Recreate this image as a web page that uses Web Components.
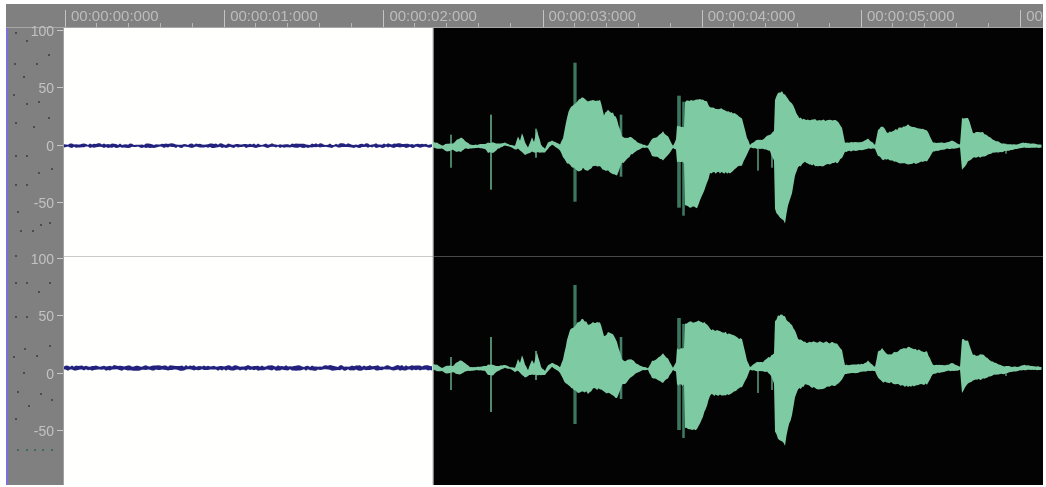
<!DOCTYPE html>
<html>
<head>
<meta charset="utf-8">
<title>Waveform</title>
<style>
  html, body { margin: 0; background: #fff; }
  body { padding: 4px 3px 2px 6px; height: 481px; overflow: hidden; }
</style>
</head>
<body>
<wave-editor>
  <time-ruler></time-ruler>
  <wave-channel height="229"></wave-channel>
  <wave-channel height="228" second></wave-channel>
</wave-editor>

<script>
// envelope in page x, offsets from the centre line (negative is up)
const ENV = [
  [433,-4,2],[437,-3,3],[442,0,3],[447,-2,6],[453,-2,4],[457,-6,6],[461,-8,6],[465,-5,3],[470,-1,3],[477,-1,2],
  [485,-2,3],[488,-3,7],[493,-3,7],[498,-2,3],[505,-3,0],[510,-1,1],[515,0,4],[518,-9,3],[520,-5,5],[522,-13,7],[525,-4,9],
  [528,2,8],[532,-8,6],[534,-4,7],[537,-16,7],[541,-1,7],[545,3,7],[548,-3,3],[552,-5,-1],[557,-3,2],[560,-1,5],[563,-8,11],
  [567,-28,17],[570,-38,19],[574,-41,22],[579,-46,26],[583,-49,23],[588,-44,25],[593,-45,21],[600,-46,21],[604,-31,24],
  [608,-35,25],[613,-33,28],[617,-26,30],[622,-9,17],[625,-7,16],[631,-9,9],[637,-4,5],[643,-1,2],[648,0,2],[652,-7,10],
  [657,-9,11],[663,-14,15],[668,-9,10],[673,0,2],[676,-6,4],[677,-19,17],[684,-19,17],[685,-44,60],[688,-45,61],
  [697,-47,62],[703,-46,48],[707,-44,38],[710,-39,27],[720,-37,27],[730,-34,27],[742,-28,19],[747,-8,9],[750,-1,2],
  [757,-6,3],[763,-6,3],[767,-10,4],[770,-11,6],[774,-15,15],[775,-46,64],[778,-52,70],[782,-54,74],[785,-51,77],
  [788,-46,60],[792,-43,47],[795,-37,30],[798,-29,22],[805,-26,17],[818,-26,21],[837,-25,17],[842,-18,12],[845,-3,6],
  [863,-4,4],[868,-7,3],[875,-1,3],[878,-16,10],[882,-19,14],[888,-13,14],[908,-21,19],[917,-18,17],[927,-16,16],
  [933,-3,6],[947,-3,3],[952,-5,3],[960,-1,2],[962,-28,25],[968,-28,16],[973,-13,12],[983,-13,11],[993,-6,7],
  [1003,-2,6],[1017,-1,3],[1023,-3,2],[1043,-1,2]
];

// x, top offset, bottom offset, width, fill; these sit behind the body of the wave
const SPIKES = [
  [451,-11,22,1.6,"#5f9e80"],[491,-31,44,1.8,"#5a9a7c"],[536,-17,12,1.8,"#5a9a7c"],
  [575,-83,56,3.2,"#3c7860"],[621,-31,31,2.6,"#44826a"],[679,-50,62,3.6,"#3c7860"],[683.5,-44,70,2.6,"#3c7860"],
  [758,-6,25,1.5,"#5f9e80"],[772,-12,22,1.5,"#5f9e80"],[1006,-2,8,1.4,"#5f9e80"]
];

function rng(seed) {
  let s = seed;
  return () => { s = (s * 9301 + 49297) % 233280; return s / 233280 - 0.5; };
}

function wavePath(cy, seed) {
  const jig = rng(seed);
  const top = [], bot = [];
  for (let i = 0; i < ENV.length - 1; i++) {
    const [x0, t0, b0] = ENV[i];
    const [x1, t1, b1] = ENV[i + 1];
    const n = Math.max(1, Math.round((x1 - x0) / 1.5));
    for (let k = 0; k < n; k++) {
      const f = k / n;
      const t = t0 + (t1 - t0) * f;
      const b = b0 + (b1 - b0) * f;
      const amp = 0.5 + Math.min(1.6, (b - t) / 25);
      top.push(`${(x0 + (x1 - x0) * f).toFixed(1)},${(cy + t + jig() * amp).toFixed(1)}`);
      bot.unshift(`${(x0 + (x1 - x0) * f).toFixed(1)},${(cy + b + jig() * amp).toFixed(1)}`);
    }
  }
  return "M" + top.concat(bot).join("L") + "Z";
}

function noisePath(cy, seed, h) {
  const jig = rng(seed);
  const top = [], bot = [];
  for (let x = 64; x <= 433; x += 2) {
    top.push(`${x},${(cy - h - jig() * 1.8).toFixed(1)}`);
    bot.unshift(`${x},${(cy + h + jig() * 1.6).toFixed(1)}`);
  }
  return "M" + top.concat(bot).join("L") + "Z";
}

class WaveEditor extends HTMLElement {
  constructor() {
    super();
    this.attachShadow({ mode: "open" });
    this.shadowRoot.innerHTML = `
      <style>
        :host {
          display: flex;
          flex-direction: column;
          width: 1037px;
          height: 481px;
          overflow: hidden;
          background: #808080;
          font-family: "Liberation Sans", Arial, sans-serif;
          filter: blur(0.6px);
        }
      </style>
      <slot></slot>
    `;
  }
}

class TimeRuler extends HTMLElement {
  constructor() {
    super();
    this.attachShadow({ mode: "open" });
    const labels = ["00:00:00:000", "00:00:01:000", "00:00:02:000", "00:00:03:000", "00:00:04:000", "00:00:05:000", "00"];
    const cells = labels.map(t => `
      <div class="sec">
        <span class="txt">${t}</span>
        <div class="minor"><i></i><i></i><i></i><i></i></div>
      </div>`).join("");
    this.shadowRoot.innerHTML = `
      <style>
        :host {
          display: flex;
          flex: 0 0 24px;
          padding-left: 59px;
          overflow: hidden;
          box-sizing: border-box;
          border-bottom: 1px solid #a8a8a8;
          color: #bcbcbc;
          font-size: 15px;
        }
        .sec {
          flex: 0 0 159.2px;
          box-sizing: border-box;
          padding: 4px 0 0 6px;
          position: relative;
          line-height: 15px;
          white-space: nowrap;
        }
        .sec::before {
          content: "";
          position: absolute;
          left: 0;
          top: 6px;
          bottom: 0;
          width: 1px;
          background: #c4c4c4;
        }
        .minor {
          display: flex;
          position: absolute;
          left: 31px;
          bottom: 0;
          gap: 31px;
        }
        .minor i {
          width: 1px;
          height: 4px;
          background: #b8b8b8;
        }
      </style>
      ${cells}
    `;
  }
}

class WaveChannel extends HTMLElement {
  constructor() {
    super();
    this.attachShadow({ mode: "open" });
  }

  connectedCallback() {
    const h = Number(this.getAttribute("height"));
    const second = this.hasAttribute("second");
    const y0 = second ? 257 : 28;
    const cy = second ? 368 : 145.7;
    const dots = second
      ? [[15,282],[26,282],[49,282],[38,291],[15,316],[26,316],[24,348],[49,345],[13,356],[36,355],[23,372],[17,391],[40,393],[51,399],[28,405],[15,418]]
      : [[15,32],[26,40],[48,54],[14,63],[36,63],[23,76],[13,94],[26,103],[38,101],[48,117],[15,122],[33,126],[15,155],[26,155],[51,168],[38,172],[15,184],[26,184],[17,211],[49,222],[40,224],[20,230],[32,230],[15,255]];
    const teal = second ? [17,26,34,42,51] : [];
    const rows = ["100", "50", "0", "-50"].map(t => `
      <div class="row"><span>${t}</span><i></i></div>`).join("");
    const spikes = SPIKES.map(([x, t, b, w, fill]) =>
      `<rect x="${x - w / 2}" y="${cy + t}" width="${w}" height="${b - t}" fill="${fill}"/>`).join("");
    this.shadowRoot.innerHTML = `
      <style>
        :host { display: flex; flex: 0 0 ${h}px; min-height: 0; position: relative; }
        .scale {
          flex: 0 0 58px;
          box-sizing: border-box;
          padding-top: ${second ? 1 : 2}px;
          border-left: 2px solid #7a70d8;
          border-right: 1px solid #a0a0a0;
          color: #c2c2c2;
          font-size: 14px;
          position: relative;
        }
        .row {
          height: 57.3px;
          display: flex;
          align-items: flex-start;
          justify-content: flex-end;
          gap: 3px;
        }
        .row:last-of-type { height: 40px; }
        .row span { line-height: 16px; margin-top: -7px; }
        .row i { width: 6px; height: 1px; background: #c8c8c8; }
        .dots { position: absolute; left: -2px; top: 0; width: 58px; height: 100%; }
        .plot { flex: 1; display: block; height: ${h}px; }
      </style>
      <div class="scale">
        <svg class="dots" viewBox="0 ${y0} 58 ${h}">
          ${dots.map(([x, y]) => `<rect x="${x - 6}" y="${y}" width="2" height="2" fill="#4c4c4c"/>`).join("")}
          ${teal.map(x => `<rect x="${x - 6}" y="449" width="2" height="2" fill="#3f6a5c"/>`).join("")}
        </svg>
        ${rows}
      </div>
      <svg class="plot" viewBox="64 ${y0} 979 ${h}" preserveAspectRatio="none">
        <rect x="64" y="${y0}" width="369" height="${h}" fill="#fffffd"/>
        <rect x="433" y="${y0}" width="610" height="${h}" fill="#030304"/>
        <rect x="432.5" y="${y0}" width="1.2" height="${h}" fill="#b5b5b5"/>
        <path d="${noisePath(cy, second ? 77 : 31, second ? 2 : 1.6)}" fill="#22227e"/>
        ${spikes}
        <path d="${wavePath(cy, second ? 211 : 53)}" fill="#7ecba3"/>
        ${second ? "" : `<rect x="64" y="256.4" width="369" height="1.6" fill="#a8a8a0"/>
        <rect x="433" y="256.4" width="610" height="1.6" fill="#777"/>`}
      </svg>
    `;
  }
}

customElements.define("wave-editor", WaveEditor);
customElements.define("time-ruler", TimeRuler);
customElements.define("wave-channel", WaveChannel);
</script>
</body>
</html>
